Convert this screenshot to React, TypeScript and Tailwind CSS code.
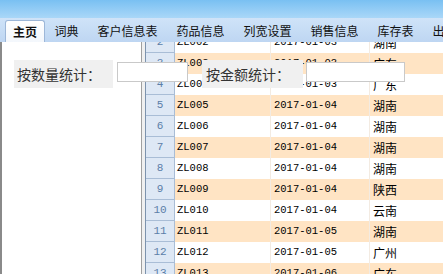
const tabs = ["主页", "词典", "客户信息表", "药品信息", "列宽设置", "销售信息", "库存表", "出"];

const rows = [
  { n: 2, id: "ZL002", date: "2017-01-03", area: "湖南" },
  { n: 3, id: "ZL003", date: "2017-01-03", area: "广东" },
  { n: 4, id: "ZL004", date: "2017-01-03", area: "广东" },
  { n: 5, id: "ZL005", date: "2017-01-04", area: "湖南" },
  { n: 6, id: "ZL006", date: "2017-01-04", area: "湖南" },
  { n: 7, id: "ZL007", date: "2017-01-04", area: "湖南" },
  { n: 8, id: "ZL008", date: "2017-01-04", area: "湖南" },
  { n: 9, id: "ZL009", date: "2017-01-04", area: "陕西" },
  { n: 10, id: "ZL010", date: "2017-01-04", area: "云南" },
  { n: 11, id: "ZL011", date: "2017-01-05", area: "湖南" },
  { n: 12, id: "ZL012", date: "2017-01-05", area: "广州" },
  { n: 13, id: "ZL013", date: "2017-01-06", area: "广东" },
];

const cjk = "font-['Noto_Sans_CJK_SC','Noto_Sans',sans-serif]";

export default function App() {
  return (
    <div className={`relative h-[274px] w-[443px] overflow-hidden bg-white ${cjk}`}>
      {/* title strip */}
      <div className="h-[18px] bg-linear-to-b from-[#79c0f2] to-[#a9d7f8]" />

      {/* tab strip */}
      <div className="flex h-[24px] items-end overflow-hidden bg-linear-to-b from-[#cfe3f8] to-[#bed6f2] pl-[5px] text-[12px] leading-none text-[#111]">
        {tabs.map((t, i) =>
          i === 0 ? (
            <div
              key={t}
              className="flex h-[22px] shrink-0 items-center whitespace-nowrap rounded-t-[3px] border border-b-0 border-[#9db7d8] bg-linear-to-b from-white to-[#f3f7fc] px-[7px] font-bold"
            >
              {t}
            </div>
          ) : (
            <div key={t} className="flex h-[22px] shrink-0 items-center whitespace-nowrap px-[9.5px]">
              {t}
            </div>
          ),
        )}
      </div>

      {/* body */}
      <div className="flex h-[232px]">
        <div className="w-[142px] shrink-0 border-l-2 border-r border-l-[#8a8a8a] border-r-[#a0a0a0] bg-white" />
        <div className="w-[3px] shrink-0 bg-[#f0f0f0]" />
        <div className="flex-1 overflow-hidden border-l border-[#7d93ad]">
          <div className="-mt-[10px]">
            {rows.map((r) => (
              <div
                key={r.n}
                className={`flex h-[21px] ${r.n % 2 === 1 ? "bg-[#ffe4c4]" : "bg-white"}`}
              >
                <div className="flex w-[29px] shrink-0 items-center justify-center border-b border-r border-[#a9bdd6] bg-[#dee8f5] font-['Liberation_Mono',monospace] text-[11px] text-[#5b7ea8]">
                  {r.n}
                </div>
                <div className="flex w-[96px] shrink-0 items-center border-r border-[#f3ebe2] pl-[2px] font-['Liberation_Mono',monospace] text-[10.5px] text-black">
                  {r.id}
                </div>
                <div className="flex w-[99px] shrink-0 items-center border-r border-[#f3ebe2] pl-[3px] font-['Liberation_Mono',monospace] text-[10.5px] text-black">
                  {r.date}
                </div>
                <div className="flex flex-1 items-center pl-[3px] text-[12px] text-black">{r.area}</div>
              </div>
            ))}
          </div>
        </div>
      </div>

      {/* statistics controls */}
      <div className="absolute left-[14px] top-[60px] flex h-[28px] w-[99px] items-center bg-[#f0f0f0] pl-[3px] text-[14px] text-[#333]">
        按数量统计：
      </div>
      <div className="absolute left-[117px] top-[62px] h-[20px] w-[71px] border border-[#c9c9c9] bg-white" />
      <div className="absolute left-[202px] top-[60px] flex h-[28px] w-[101px] items-center bg-[#f0f0f0] pl-[4px] text-[14px] text-[#333]">
        按金额统计：
      </div>
      <div className="absolute left-[306px] top-[62px] h-[20px] w-[99px] border border-[#c9c9c9] bg-white" />
    </div>
  );
}
